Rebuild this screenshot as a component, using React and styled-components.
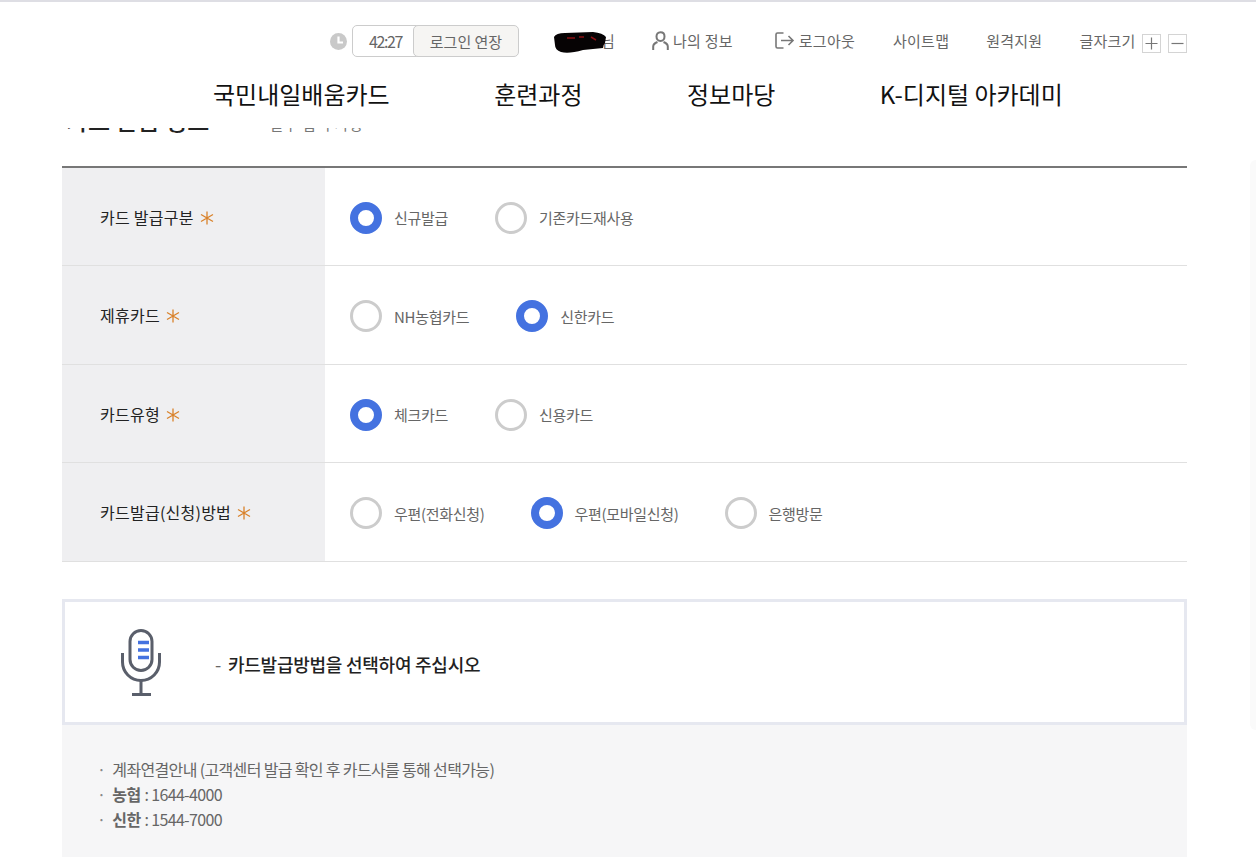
import React from 'react';
import styled, { createGlobalStyle } from 'styled-components';

const GlobalStyle = createGlobalStyle`
  html, body {
    margin: 0;
    padding: 0;
    height: 857px;
    overflow: hidden;
    background: #fff;
    font-family: "Noto Sans CJK KR", "Noto Sans", sans-serif;
  }
  * { box-sizing: border-box; }
`;

const Page = styled.div`
  position: relative;
  width: 1256px;
  height: 857px;
  overflow: hidden;
  border-top: 2px solid #dedee4;
`;

const Header = styled.header`
  height: 126px;
  padding-top: 23px;
`;

const UtilBar = styled.div`
  display: flex;
  align-items: center;
  height: 32px;
  padding-left: 330px;
  font-size: 15px;
  letter-spacing: 0.25px;
  color: #666;
`;

const Timer = styled.div`
  display: flex;
  margin: 0 34px 0 5px;
`;

const TimeBox = styled.span`
  width: 68px;
  height: 32px;
  padding-right: 1px;
  border: 1px solid #ccc;
  border-radius: 5px 0 0 5px;
  line-height: 30px;
  text-align: center;
  font-size: 16px;
  letter-spacing: -1.4px;
`;

const ExtendButton = styled.button`
  width: 106px;
  height: 32px;
  margin-left: -7px;
  padding: 0;
  border: 1px solid #ccc;
  border-radius: 5px;
  background: #f6f5f3;
  color: #666;
  font: inherit;
  font-size: 15px;
  letter-spacing: 0;
`;

const UserName = styled.span`
  display: flex;
  align-items: center;
  width: 62px;
  margin-right: 37px;
  padding-bottom: 1px;
`;

const Redaction = styled.svg`
  position: relative;
  z-index: 1;
  flex: none;
  margin: 5px -6px 0 0;
`;

const UtilLink = styled.a`
  display: flex;
  align-items: center;
  gap: ${(props) => props.$gap || 0}px;
  margin-right: ${(props) => props.$right || 0}px;
  padding-bottom: 2px;
  color: inherit;
  white-space: nowrap;
`;

const SizeButton = styled.span`
  display: flex;
  width: 19px;
  height: 19px;
  margin-top: 4px;
  margin-left: ${(props) => props.$left}px;
  border: 1px solid #d4d4d4;
`;

const MainNav = styled.nav`
  display: flex;
  gap: 104.5px;
  padding-left: 213px;
  margin-top: 19px;
  font-size: 24px;
  line-height: 36px;
  color: #111;
`;

const TitleStrip = styled.div`
  display: flex;
  gap: 60px;
  height: 38px;
  padding-left: 66px;
  overflow: hidden;
`;

const Title = styled.h2`
  flex: none;
  height: 38px;
  margin: -27px 0 0;
  font-size: 24px;
  font-weight: 500;
  line-height: 38px;
  color: #222;
`;

const SubTitle = styled.span`
  flex: none;
  height: 20px;
  margin-top: -14px;
  font-size: 15px;
  letter-spacing: 0.6px;
  line-height: 20px;
  color: #777;
`;

const FormTable = styled.div`
  width: 1125px;
  margin-left: 62px;
  border-top: 2px solid #777;
`;

const Row = styled.div`
  display: flex;
  height: ${(props) => props.$height}px;
  border-bottom: 1px solid #e0e0e0;
`;

const Label = styled.div`
  display: flex;
  align-items: center;
  gap: 6px;
  width: 263px;
  padding: 0 0 0 38px;
  background: #efeff1;
  font-size: 16px;
  letter-spacing: 0.25px;
  color: #222;
`;

const Star = styled.svg`
  width: 14px;
  height: 14px;
  margin-top: 2px;
`;

const Options = styled.div`
  display: flex;
  align-items: center;
  padding: 2px 0 0 25px;
`;

const Option = styled.label`
  display: flex;
  align-items: center;
  gap: 12px;
  margin-right: ${(props) => props.$right}px;
  font-size: 15px;
  letter-spacing: -0.3px;
  color: #666;
`;

const Radio = styled.span`
  display: block;
  width: 32px;
  height: 32px;
  border-radius: 50%;
  border: ${(props) => (props.$checked ? '8px solid #4472e0' : '3px solid #ccc')};
  background: #fff;
`;

const Notice = styled.div`
  display: flex;
  align-items: center;
  width: 1125px;
  height: 126px;
  margin: 37px 0 0 62px;
  padding-left: 56px;
  border: 3px solid #e6e8f0;
  color: #222;
`;

const NoticeText = styled.p`
  margin: 3px 0 0 54px;
  font-size: 18px;
  font-weight: 500;
  letter-spacing: -0.25px;

  span {
    margin-right: 7px;
    color: #666;
    font-weight: 400;
  }
`;

const InfoPanel = styled.ul`
  width: 1125px;
  height: 140px;
  margin: 0 0 0 62px;
  padding: 32px 0 0 35px;
  list-style: none;
  background: #f6f6f7;
  font-size: 16px;
  line-height: 25px;
  letter-spacing: -0.65px;
  color: #666;
`;

const InfoItem = styled.li`
  display: flex;
  gap: 7px;

  &::before {
    content: '·';
    color: #888;
  }

  b {
    font-weight: 700;
    margin-right: 4px;
  }
`;

const SidePanel = styled.div`
  position: absolute;
  top: 158px;
  right: 0;
  width: 6px;
  height: 570px;
  border-radius: 10px 0 0 10px;
  background: #fafafa;
`;

const cardRows = [
  { label: '카드 발급구분', height: 98, gap: 47, options: [{ text: '신규발급', checked: true }, { text: '기존카드재사용' }] },
  { label: '제휴카드', height: 99, gap: 47, options: [{ text: 'NH농협카드' }, { text: '신한카드', checked: true }] },
  { label: '카드유형', height: 98, gap: 47, options: [{ text: '체크카드', checked: true }, { text: '신용카드' }] },
  { label: '카드발급(신청)방법', height: 99, gap: 46, options: [{ text: '우편(전화신청)' }, { text: '우편(모바일신청)', checked: true }, { text: '은행방문' }] },
];

function ClockIcon() {
  return (
    <svg width="17" height="17" viewBox="0 0 17 17">
      <circle cx="8.5" cy="8.5" r="8.5" fill="#c9c9c9" />
      <path d="M8.5 3.500v6h4.500" fill="none" stroke="#fff" strokeWidth="2.200" />
    </svg>
  );
}

function Scribble() {
  return (
    <Redaction width="54" height="24" viewBox="0 0 54 24">
      <path d="M1 6 Q3 2 12 2 L40 1 Q50 2 53 6 L52 12 Q50 14 50 17 L30 19 Q16 23 8 21 Q2 19 2 14 Z" fill="#060304" />
      <path d="M14 7h8M38 6l5 3M26 6h5" stroke="#8a0f12" strokeWidth="1.5" />
    </Redaction>
  );
}

function UserIcon() {
  return (
    <svg width="17" height="19" viewBox="0 0 17 19" fill="none" stroke="#777" strokeWidth="2">
      <path d="M8.5 1.2c-2.6 0-4 1.9-4 4.3 0 2.300 1.400 4.500 4 4.500s4-2.200 4-4.500c0-2.400-1.400-4.300-4-4.300z" />
      <path d="M1.200 19v-3.500c0-2 1.800-3.500 4.300-4.500M15.800 19v-3.500c0-2-1.800-3.500-4.300-4.500" />
    </svg>
  );
}

function LogoutIcon() {
  return (
    <svg width="20" height="17" viewBox="0 0 20 17" fill="none" stroke="#777" strokeWidth="1.6">
      <path d="M8.500 1H2.500Q1 1 1 2.500v12Q1 16 2.500 16h6" />
      <path d="M6 8.500h12M13.500 4l4.500 4.500-4.500 4.500" />
    </svg>
  );
}

function PlusIcon() {
  return (
    <svg width="17" height="17" viewBox="0 0 17 17" stroke="#777" strokeWidth="1.2">
      <path d="M2.500 8.500h12M8.500 2.500v12" />
    </svg>
  );
}

function MinusIcon() {
  return (
    <svg width="17" height="17" viewBox="0 0 17 17" stroke="#777" strokeWidth="1.2">
      <path d="M2.500 8.500h12" />
    </svg>
  );
}

function StarIcon() {
  return (
    <Star viewBox="0 0 14 14" stroke="#d9822b" strokeWidth="1.300">
      <path d="M7 0.500v13M1 3.500l12 7M13 3.500l-12 7" />
    </Star>
  );
}

function MicIcon() {
  return (
    <svg width="40" height="67" viewBox="0 0 40 67" fill="none">
      <rect x="9" y="1.500" width="22" height="40" rx="11" stroke="#5a5f6b" strokeWidth="3" />
      <path d="M17 13.500h11M17 21h11M17 28.500h11" stroke="#4472e0" strokeWidth="3.500" />
      <path d="M1.500 24v9c0 10 8 18.500 18.500 18.500S38.500 43 38.500 33v-9" stroke="#5a5f6b" strokeWidth="3" />
      <path d="M20 51.500V64M11 65.500h19" stroke="#5a5f6b" strokeWidth="3" />
    </svg>
  );
}

function App() {
  return (
    <Page>
      <GlobalStyle />
      <Header>
        <UtilBar>
          <ClockIcon />
          <Timer>
            <TimeBox>42:27</TimeBox>
            <ExtendButton>로그인 연장</ExtendButton>
          </Timer>
          <UserName>
            <Scribble />
            님
          </UserName>
          <UtilLink $gap={4} $right={42}><UserIcon />나의 정보</UtilLink>
          <UtilLink $gap={4} $right={38}><LogoutIcon />로그아웃</UtilLink>
          <UtilLink $right={37}>사이트맵</UtilLink>
          <UtilLink $right={37}>원격지원</UtilLink>
          <UtilLink>글자크기</UtilLink>
          <SizeButton $left={6}><PlusIcon /></SizeButton>
          <SizeButton $left={7}><MinusIcon /></SizeButton>
        </UtilBar>
        <MainNav>
          <span>국민내일배움카드</span>
          <span>훈련과정</span>
          <span>정보마당</span>
          <span>K-디지털 아카데미</span>
        </MainNav>
      </Header>
      <TitleStrip>
        <Title>카드 발급 정보</Title>
        <SubTitle>필수 입력 사항</SubTitle>
      </TitleStrip>
      <FormTable>
        {cardRows.map((row) => (
          <Row key={row.label} $height={row.height}>
            <Label>{row.label}<StarIcon /></Label>
            <Options>
              {row.options.map((option) => (
                <Option key={option.text} $right={row.gap}>
                  <Radio $checked={option.checked} />
                  {option.text}
                </Option>
              ))}
            </Options>
          </Row>
        ))}
      </FormTable>
      <Notice>
        <MicIcon />
        <NoticeText><span>-</span>카드발급방법을 선택하여 주십시오</NoticeText>
      </Notice>
      <InfoPanel>
        <InfoItem>계좌연결안내 (고객센터 발급 확인 후 카드사를 통해 선택가능)</InfoItem>
        <InfoItem><span><b>농협</b>: 1644-4000</span></InfoItem>
        <InfoItem><span><b>신한</b>: 1544-7000</span></InfoItem>
      </InfoPanel>
      <SidePanel />
    </Page>
  );
}

export default App;
